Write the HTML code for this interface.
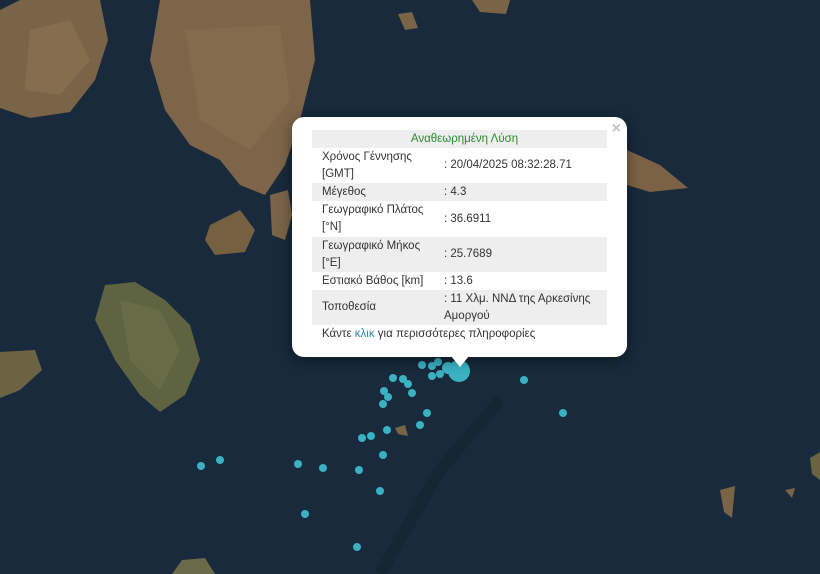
<!DOCTYPE html>
<html><head><meta charset="utf-8"><style>
body{margin:0;width:820px;height:574px;overflow:hidden;background:#182a3b;font-family:"Liberation Sans","DejaVu Sans",sans-serif;position:relative}
svg{position:absolute;left:0;top:0}
.pop{position:absolute;left:292px;top:117px;width:335px;height:240px;background:#fff;border-radius:12px;box-shadow:0 3px 14px rgba(0,0,0,.4)}
.tip{position:absolute;left:451px;top:356px;width:0;height:0;border-left:9px solid transparent;border-right:9px solid transparent;border-top:11px solid #fff}
.x{position:absolute;right:6px;top:3px;color:#c3c3c3;font-size:16px;font-weight:bold}
table{position:absolute;left:20px;top:13px;width:295px;border-collapse:collapse;font-size:11.5px;color:#333}
td{padding:0 0 0 10px;line-height:17px;vertical-align:middle}
tr.g{background:#eeeeee}
td.v{padding-left:1px;width:163px}
.h td{text-align:center;color:#2b8a2b;height:18px}
.f{position:absolute;left:30px;top:211px;font-size:11.5px;color:#333}
.f span{color:#2a8cb0}
</style></head><body>
<svg width="820" height="574">
<path d="M20 0 L100 0 L108 40 L95 80 L70 112 L30 118 L0 108 L0 10Z" fill="#7a6448"/>
<path d="M30 30 L70 20 L90 60 L60 95 L25 90Z" fill="#8a7154" opacity=".7"/>
<path d="M160 0 L310 0 L315 60 L300 120 L285 165 L265 195 L240 185 L220 160 L190 145 L165 110 L150 60Z" fill="#7d6549"/>
<path d="M185 30 L280 25 L290 100 L250 150 L200 120Z" fill="#8b7052" opacity=".6"/>
<path d="M105 285 L135 282 L165 300 L190 325 L200 360 L185 395 L160 412 L140 395 L115 360 L95 320Z" fill="#5e6440"/>
<path d="M120 300 L160 310 L180 350 L160 390 L130 360Z" fill="#6b6e48" opacity=".7"/>
<path d="M210 225 L240 210 L255 230 L245 252 L215 255 L205 240Z" fill="#75603f"/>
<path d="M270 195 L288 190 L292 215 L285 240 L272 235Z" fill="#7a6448"/>
<path d="M0 352 L35 350 L42 370 L20 390 L0 398Z" fill="#6a6443"/>
<path d="M627 150 L660 165 L688 188 L650 192 L627 185Z" fill="#7b6245"/>
<path d="M172 574 L182 560 L205 558 L215 574Z" fill="#6a6a48"/>
<path d="M398 14 L412 12 L418 28 L405 30Z" fill="#7a6448"/>
<path d="M472 0 L510 0 L506 14 L480 12Z" fill="#7a6448"/>
<path d="M720 490 L735 486 L732 518 L724 512Z" fill="#7a6448"/>
<path d="M810 458 L820 452 L820 480 L812 474Z" fill="#6a6443"/>
<path d="M785 490 L795 488 L792 498Z" fill="#7a6448"/>
<path d="M395 428 L405 425 L408 436 L398 434Z" fill="#7a6448"/>
<path d="M500 400 L440 470 L380 574" stroke="#10202c" stroke-width="12" fill="none" opacity=".35"/>
<g fill="#3ab2c2">
<circle cx="459" cy="371" r="11"/>
<circle cx="448" cy="368" r="6"/><circle cx="422" cy="365" r="4"/><circle cx="432" cy="366" r="4"/><circle cx="438" cy="362" r="4"/><circle cx="432" cy="376" r="4"/><circle cx="440" cy="374" r="4"/>
<circle cx="524" cy="380" r="4"/><circle cx="563" cy="413" r="4"/>
<circle cx="393" cy="378" r="4"/><circle cx="403" cy="379" r="4"/><circle cx="408" cy="384" r="4"/><circle cx="384" cy="391" r="4"/><circle cx="388" cy="397" r="4"/><circle cx="412" cy="393" r="4"/><circle cx="383" cy="404" r="4"/><circle cx="427" cy="413" r="4"/><circle cx="420" cy="425" r="4"/>
<circle cx="387" cy="430" r="4"/><circle cx="371" cy="436" r="4"/><circle cx="362" cy="438" r="4"/><circle cx="383" cy="455" r="4"/>
<circle cx="359" cy="470" r="4"/><circle cx="380" cy="491" r="4"/><circle cx="323" cy="468" r="4"/><circle cx="298" cy="464" r="4"/>
<circle cx="220" cy="460" r="4"/><circle cx="201" cy="466" r="4"/><circle cx="305" cy="514" r="4"/><circle cx="357" cy="547" r="4"/>
</g>
</svg>
<div class="pop">
<div class="x">×</div>
<table>
<tr class="g h"><td colspan="2">Αναθεωρημένη Λύση</td></tr>
<tr style="height:35px"><td>Χρόνος Γέννησης<br>[GMT]</td><td class="v">: 20/04/2025 08:32:28.71</td></tr>
<tr class="g" style="height:18px"><td>Μέγεθος</td><td class="v">: 4.3</td></tr>
<tr style="height:36px"><td>Γεωγραφικό Πλάτος<br>[°N]</td><td class="v">: 36.6911</td></tr>
<tr class="g" style="height:35px"><td>Γεωγραφικό Μήκος<br>[°E]</td><td class="v">: 25.7689</td></tr>
<tr style="height:18px"><td>Εστιακό Βάθος [km]</td><td class="v">: 13.6</td></tr>
<tr class="g" style="height:35px"><td>Τοποθεσία</td><td class="v">: 11 Χλμ. ΝΝΔ της Αρκεσίνης Αμοργού</td></tr>
</table>
<div class="f">Κάντε <span>κλικ</span> για περισσότερες πληροφορίες</div>
</div>
<div class="tip"></div>
</body></html>
